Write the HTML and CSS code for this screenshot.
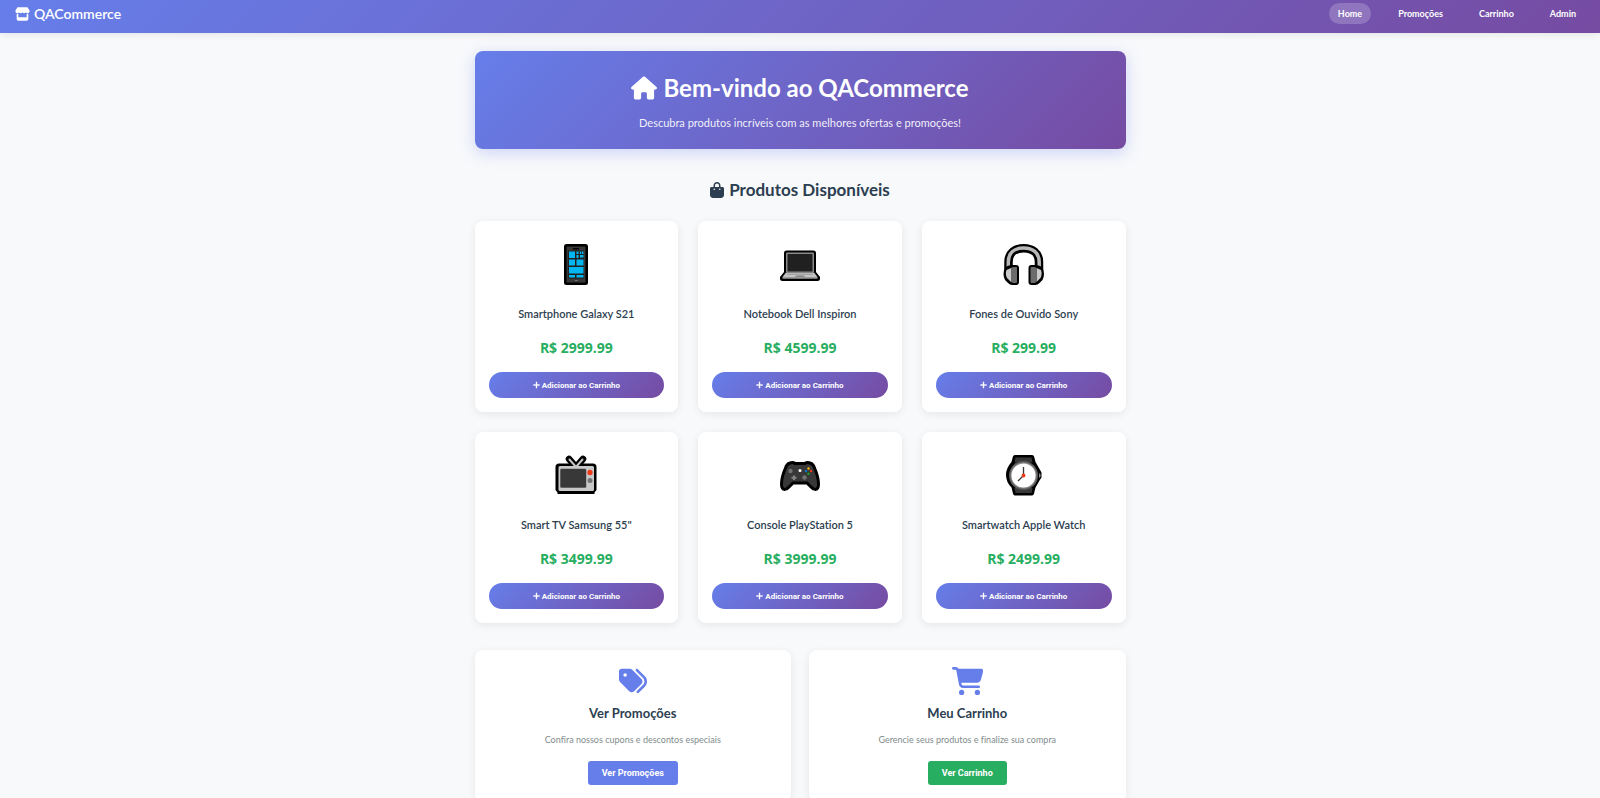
FILE: index.html
```html
<!DOCTYPE html>
<html lang="pt-BR">
<head>
<meta charset="utf-8">
<title>QACommerce</title>
<link rel="stylesheet" href="styles.css">
</head>
<body>
<svg class="defs" aria-hidden="true">
  <symbol id="plus" viewBox="0 0 448 512"><path d="M256 80c0-17.700-14.300-32-32-32s-32 14.300-32 32V224H48c-17.700 0-32 14.300-32 32s14.300 32 32 32H192V432c0 17.700 14.300 32 32 32s32-14.300 32-32V288H400c17.700 0 32-14.300 32-32s-14.300-32-32-32H256V80z"/></symbol>
</svg>
<header class="navbar">
  <a class="brand" href="#">
    <svg class="brand-icon" viewBox="0 0 576 512" aria-hidden="true"><path d="M547.6 103.800L490.300 13.100C485.200 5 476.100 0 466.400 0H109.600C99.900 0 90.800 5 85.700 13.100L28.300 103.800c-29.600 46.800-3.400 111.900 51.900 119.400c4 .5 8.100 .8 12.100 .8c26.100 0 49.300-11.400 65.200-29c15.900 17.600 39.100 29 65.200 29c26.100 0 49.300-11.400 65.200-29c15.900 17.600 39.100 29 65.200 29c26.200 0 49.300-11.400 65.200-29c16 17.600 39.100 29 65.200 29c4.100 0 8.100-.3 12.100-.8c55.500-7.400 81.800-72.500 52.100-119.400zM499.700 254.900l-.1 0c-5.300 .7-10.700 1.100-16.200 1.100c-12.400 0-24.300-1.900-35.400-5.300V384H128V250.600c-11.200 3.500-23.200 5.400-35.600 5.400c-5.500 0-11-.4-16.300-1.100l-.1 0c-4.100-.6-8.100-1.300-12-2.300V384v64c0 35.300 28.700 64 64 64H448c35.300 0 64-28.700 64-64V384 252.600c-4 1-8 1.800-12.300 2.300z"/></svg>
    QACommerce
  </a>
  <nav class="menu">
    <a class="menu-link active" href="#">Home</a>
    <a class="menu-link" href="#">Promoções</a>
    <a class="menu-link" href="#">Carrinho</a>
    <a class="menu-link" href="#">Admin</a>
  </nav>
</header>
<main class="container">
  <section class="hero">
    <h1 class="hero-title">
      <svg class="hero-icon" viewBox="0 0 576 512" aria-hidden="true"><path d="M575.8 255.500c0 18-15 32.100-32 32.100h-32l.7 160.200c0 2.700-.2 5.400-.5 8.100V472c0 22.100-17.900 40-40 40H456c-1.100 0-2.200 0-3.300-.1c-1.400 .1-2.800 .1-4.200 .1H416 392c-22.100 0-40-17.900-40-40V448 384c0-17.700-14.300-32-32-32H256c-17.700 0-32 14.300-32 32v64 24c0 22.100-17.900 40-40 40H160 128.100c-1.500 0-3-.1-4.500-.2c-1.200 .1-2.400 .2-3.600 .2H104c-22.100 0-40-17.900-40-40V360c0-.9 0-1.900 .1-2.800V287.600H32c-18 0-32-14-32-32.100c0-9 3-17 10-24L266.400 8c7-7 15-8 22-8s15 2 21 7L564.800 231.500c8 7 12 15 11 24z"/></svg>
      Bem-vindo ao QACommerce
    </h1>
    <p class="hero-text">Descubra produtos incríveis com as melhores ofertas e promoções!</p>
  </section>

  <h2 class="section-title">
    <svg class="section-icon" viewBox="0 0 448 512" aria-hidden="true"><path d="M160 112c0-35.300 28.700-64 64-64s64 28.700 64 64v48H160V112zm-48 48H48c-26.500 0-48 21.500-48 48V416c0 53 43 96 96 96H352c53 0 96-43 96-96V208c0-26.500-21.500-48-48-48H336V112C336 50.100 285.900 0 224 0S112 50.100 112 112v48zm24 48a24 24 0 1 1 0 48 24 24 0 1 1 0-48zm152 24a24 24 0 1 1 48 0 24 24 0 1 1 -48 0z"/></svg>
    Produtos Disponíveis
  </h2>

  <section class="products">
    <article class="card product">
      <svg class="product-icon" viewBox="0 0 42 42" aria-hidden="true">
        <rect x="9" y="1" width="24" height="41" rx="2.500" fill="#000"/>
        <rect x="11.500" y="3.500" width="19" height="36" rx="1" fill="#383838"/>
        <path d="M18 5h6v1.500h-6z" fill="#000"/>
        <rect x="13" y="7.500" width="16" height="28" fill="#202020"/>
        <path d="M14 8.500h6v6.500h-6zM21.500 8.500h2v2.500h-2zM24.800 8.500h1.500v2.500h-1.500zM27 8.500h1.500v2.500h-1.500zM21.500 12h2v3h-2zM25 12h3.500v2.500H25zM14 16.500h6v6h-6zM21.500 16.500h7v6h-7zM14 24h14.500v6.500H14zM14 32h6v2.500h-6zM21.500 32h7v2.500h-7z" fill="#00b7f1"/>
        <path d="M20 37h2.500v1H20z" fill="#777"/>
      </svg>
      <h3 class="product-name">Smartphone Galaxy S21</h3>
      <p class="price">R$ 2999.99</p>
      <button class="add" type="button"><svg class="add-icon" aria-hidden="true"><use href="#plus"/></svg>Adicionar ao Carrinho</button>
    </article>
    <article class="card product">
      <svg class="product-icon" viewBox="0 0 42 42" aria-hidden="true">
        <path d="M7.500 7.500h27q2.500 0 2.500 2.500v19l4 5v2q0 2-2.500 2h-35Q1 38 1 36v-2l4-5V10q0-2.500 2.500-2.500z" fill="#000"/>
        <rect x="7" y="9.500" width="28" height="20" rx="1" fill="#8a8a8a"/>
        <rect x="8.500" y="11" width="25" height="17.500" fill="#202020"/>
        <path d="M7 29.500h28l3.500 4.500h-35z" fill="#c4c4c4"/>
        <path d="M9 30.500h24l1 1.500H8z" fill="#a5a5a5"/>
        <path d="M17 32.500h8l1 1.500H16z" fill="#858585"/>
        <path d="M3.500 34h35v1.800h-35z" fill="#9a9a9a"/>
      </svg>
      <h3 class="product-name">Notebook Dell Inspiron</h3>
      <p class="price">R$ 4599.99</p>
      <button class="add" type="button"><svg class="add-icon" aria-hidden="true"><use href="#plus"/></svg>Adicionar ao Carrinho</button>
    </article>
    <article class="card product">
      <svg class="product-icon" viewBox="0 0 42 42" aria-hidden="true">
        <path d="M5.500 28V19C5.500 10 12 5.200 20.700 5.200S36 10 36 19v9" fill="none" stroke="#000" stroke-width="8.500"/>
        <path d="M5.300 27V19C5.300 9.500 12 5 20.700 5S36.200 9.500 36.200 19v8" fill="none" stroke="#b8b8b8" stroke-width="3.500"/>
        <path d="M2 25q2-3 8-3h3q3 0 3 3v14q0 3-3 3H9q-2 0-4-2l-3-3q-3-6 0-12z" fill="#000"/>
        <path d="M39.500 25q-2-3-8-3h-3q-3 0-3 3v14q0 3 3 3h4q2 0 4-2l3-3q3-6 0-12z" fill="#000"/>
        <path d="M3.500 27L8 25v14l-4-4q-2-4-.5-8zM38 27l-4.500-2v14l4-4q2-4 .5-8z" fill="#c9c9c9"/>
        <path d="M8 25q1-1 3-1h2q1 0 1 1v14q0 1-1 1h-3l-2-1zM33.500 25q-1-1-3-1h-2q-1 0-1 1v14q0 1 1 1h3l2-1z" fill="#6b6b6b"/>
      </svg>
      <h3 class="product-name">Fones de Ouvido Sony</h3>
      <p class="price">R$ 299.99</p>
      <button class="add" type="button"><svg class="add-icon" aria-hidden="true"><use href="#plus"/></svg>Adicionar ao Carrinho</button>
    </article>
    <article class="card product">
      <svg class="product-icon" viewBox="0 0 42 42" aria-hidden="true">
        <path d="M14 5l7 8 7-8" fill="none" stroke="#000" stroke-width="6.500" stroke-linecap="round" stroke-linejoin="round"/>
        <path d="M4 9.500h34q3.500 0 3.500 3.500v23l-2 2.500V40h-37v-1.500l-2-2.500V13q0-3.500 3.500-3.500z" fill="#000"/>
        <path d="M14 5l7 8 7-8" fill="none" stroke="#c5c5c5" stroke-width="2"/>
        <rect x="3.500" y="12" width="35.500" height="25" rx="1.500" fill="#c8c8c8"/>
        <rect x="5" y="14.500" width="26.500" height="19.500" rx="1.500" fill="#8a8a8a"/>
        <rect x="5.500" y="15" width="25.500" height="18.500" rx="1" fill="#383838"/>
        <circle cx="35" cy="18.500" r="2.700" fill="#f03a17"/>
        <circle cx="35" cy="26.500" r="2.500" fill="#737373"/>
      </svg>
      <h3 class="product-name">Smart TV Samsung 55"</h3>
      <p class="price">R$ 3499.99</p>
      <button class="add" type="button"><svg class="add-icon" aria-hidden="true"><use href="#plus"/></svg>Adicionar ao Carrinho</button>
    </article>
    <article class="card product">
      <svg class="product-icon" viewBox="0 0 42 42" aria-hidden="true">
        <path d="M11 9q3-1.200 5 .5h10q2-1.700 5-.5 3.500 1 4.500 5 4 9 4 16 0 5-3 5.500-2.500 0-5-3l-3.500-3.500H14L10.500 32.500q-2.500 3-5 3-3-.5-3-5.500 0-7 4-16 1-4 4.500-5z" fill="#383838" stroke="#000" stroke-width="3"/>
        <circle cx="11.500" cy="17" r="2.200" fill="#737373"/>
        <circle cx="25.500" cy="23.500" r="2.200" fill="#737373"/>
        <path d="M14 21.500h2v1.300h1.500v2H16V26h-2v-1.200h-1.500v-2H14z" fill="#858585"/>
        <circle cx="21" cy="16.500" r="1.500" fill="#fff"/>
        <circle cx="29.500" cy="14.500" r="1.200" fill="#fcb900"/>
        <circle cx="32" cy="17" r="1.200" fill="#f03a17"/>
        <circle cx="27" cy="17" r="1.200" fill="#0078d7"/>
        <circle cx="29.500" cy="19.800" r="1.200" fill="#16a016"/>
      </svg>
      <h3 class="product-name">Console PlayStation 5</h3>
      <p class="price">R$ 3999.99</p>
      <button class="add" type="button"><svg class="add-icon" aria-hidden="true"><use href="#plus"/></svg>Adicionar ao Carrinho</button>
    </article>
    <article class="card product">
      <svg class="product-icon" viewBox="0 0 42 42" aria-hidden="true">
        <path d="M12 1h17q2 0 2.500 3l1 4 4 7 2 3.500v5l-2 3-4 7-1 4q-.5 4-2.500 4H12q-2 0-2.500-4l-1-4Q3 28 3 21t5.500-13l1-4Q10 1 12 1z" fill="#000"/>
        <path d="M12.500 3.500h16l1 5h-18zM12.500 39h16l1-5h-18z" fill="#383838"/>
        <circle cx="20.500" cy="21.500" r="14.500" fill="#5d5d5d"/>
        <circle cx="20.500" cy="21.500" r="13" fill="#8e8e8e"/>
        <circle cx="20.500" cy="21.500" r="12" fill="#fff"/>
        <path d="M36 19l1.500 1.500v2L36 24z" fill="#8e8e8e"/>
        <path d="M20.500 13v8.500l-5.500 5.500" fill="none" stroke="#383838" stroke-width="1.300"/>
        <circle cx="20.500" cy="21.500" r="1.900" fill="#f03a17"/>
      </svg>
      <h3 class="product-name">Smartwatch Apple Watch</h3>
      <p class="price">R$ 2499.99</p>
      <button class="add" type="button"><svg class="add-icon" aria-hidden="true"><use href="#plus"/></svg>Adicionar ao Carrinho</button>
    </article>
  </section>

  <section class="actions">
    <article class="card action">
      <svg class="action-icon" viewBox="0 0 512 512" aria-hidden="true"><path d="M345 39.100L472.800 168.400c52.400 53 52.400 138.200 0 191.200L360.800 472.900c-9.300 9.400-24.500 9.500-33.900 .2s-9.500-24.500-.2-33.900L438.600 325.900c33.900-34.300 33.900-89.400 0-123.700L310.900 72.900c-9.300-9.400-9.200-24.600 .2-33.900s24.600-9.200 33.900 .2zM0 229.500V80C0 53.500 21.500 32 48 32H197.500c17 0 33.300 6.700 45.300 18.700l168 168c25 25 25 65.500 0 90.500L277.300 442.700c-25 25-65.500 25-90.500 0l-168-168C6.700 262.700 0 246.500 0 229.500zM144 144a32 32 0 1 0 -64 0 32 32 0 1 0 64 0z"/></svg>
      <h3 class="action-title">Ver Promoções</h3>
      <p class="action-text">Confira nossos cupons e descontos especiais</p>
      <button class="go" type="button">Ver Promoções</button>
    </article>
    <article class="card action">
      <svg class="action-icon" viewBox="0 0 576 512" aria-hidden="true"><path d="M0 24C0 10.700 10.700 0 24 0H69.500c22 0 41.500 12.800 50.600 32h411c26.300 0 45.500 25 38.600 50.400l-41 152.300c-8.500 31.400-37 53.300-69.500 53.300H170.700l5.400 28.500c2.200 11.300 12.100 19.500 23.600 19.500H488c13.300 0 24 10.700 24 24s-10.700 24-24 24H199.700c-34.600 0-64.300-24.600-70.700-58.500L77.400 54.500c-.7-3.800-4-6.500-7.900-6.500H24C10.700 48 0 37.300 0 24zM128 464a48 48 0 1 1 96 0 48 48 0 1 1 -96 0zm336-48a48 48 0 1 1 0 96 48 48 0 1 1 0-96z"/></svg>
      <h3 class="action-title">Meu Carrinho</h3>
      <p class="action-text">Gerencie seus produtos e finalize sua compra</p>
      <button class="go go-green" type="button">Ver Carrinho</button>
    </article>
  </section>
</main>
</body>
</html>
```

FILE: styles.css
```css
* { box-sizing: border-box; margin: 0; }
body {
  background: #f8f9fb;
  color: #2c3e50;
  font-family: "Segoe UI", Lato, "Open Sans", sans-serif;
  font-size: 11px;
  font-variant-ligatures: none;
  overflow-x: hidden;
}
svg { fill: currentColor; flex: none; }
.defs { display: none; }
.navbar {
  display: flex;
  justify-content: space-between;
  align-items: flex-start;
  padding: 3px 15px 9px;
  color: #fff;
  background: linear-gradient(135deg, #667eea 0%, #764ba2 100%);
  box-shadow: 0 1px 8px rgba(0, 0, 0, 0.1);
}
.brand {
  display: flex;
  align-items: center;
  gap: 4px;
  color: #fff;
  font-size: 14px;
  font-weight: 600;
  line-height: 21px;
  text-decoration: none;
}
.brand-icon { width: 15px; height: 14px; }
.menu { display: flex; gap: 18px; }
.menu-link {
  padding: 0 9px;
  border-radius: 12px;
  color: #fff;
  font-size: 9px;
  font-weight: 700;
  line-height: 21px;
  text-decoration: none;
}
.active { background: rgba(255, 255, 255, 0.2); }
.container { max-width: 651px; margin: 18px auto 0; }
.hero {
  padding: 21px 20px 18px;
  border-radius: 8px;
  color: #fff;
  text-align: center;
  background: linear-gradient(135deg, #667eea 0%, #764ba2 100%);
  box-shadow: 0 4px 16px rgba(102, 126, 234, 0.3);
}
.hero-title {
  display: flex;
  justify-content: center;
  align-items: center;
  gap: 6px;
  font-size: 24px;
  font-weight: 700;
  line-height: 32px;
}
.hero-icon { width: 26px; height: 24px; }
.hero-text { margin-top: 11px; font-size: 11px; line-height: 16px; opacity: 0.9; }
.section-title {
  display: flex;
  justify-content: center;
  align-items: center;
  gap: 5px;
  margin: 30px 0 20px;
  font-size: 17px;
  font-weight: 700;
  line-height: 22px;
}
.section-icon { width: 14px; height: 16px; }
.card {
  display: flex;
  flex-direction: column;
  align-items: center;
  border-radius: 8px;
  background: #fff;
  box-shadow: 0 2px 8px rgba(0, 0, 0, 0.08);
}
.products { display: grid; grid-template-columns: repeat(3, 1fr); gap: 20px; }
.product { padding: 22px 14px 14px; }
.product-icon { width: 42px; height: 42px; }
.product-name { margin-top: 21px; font-size: 11px; font-weight: 600; line-height: 16px; }
.price {
  margin-top: 16px;
  color: #27ae60;
  font-family: "Segoe UI", "Open Sans", sans-serif;
  font-size: 14px;
  font-weight: 700;
  line-height: 20px;
}
button { border: 0; color: #fff; font-family: Roboto, Arial, sans-serif; font-weight: 700; }
.add {
  display: flex;
  justify-content: center;
  align-items: center;
  gap: 2px;
  width: 100%;
  height: 26px;
  margin-top: 14px;
  border-radius: 13px;
  font-size: 8px;
  background: linear-gradient(135deg, #667eea 0%, #764ba2 100%);
}
.add-icon { width: 7px; height: 8px; stroke: currentColor; stroke-width: 24px; }
.actions { display: grid; grid-template-columns: repeat(2, 1fr); gap: 18px; margin-top: 27px; }
.action { padding: 17px 18px; }
.action-icon { height: 28px; color: #667eea; }
.action-title { margin-top: 8px; font-size: 13px; font-weight: 700; line-height: 20px; }
.action-text { margin-top: 10px; color: #7f8c8d; font-size: 9px; line-height: 14px; }
.go { height: 24px; margin-top: 14px; padding: 0 14px; border-radius: 3px; background: #667eea; font-size: 9px; }
.go-green { background: #27ae60; }
```
